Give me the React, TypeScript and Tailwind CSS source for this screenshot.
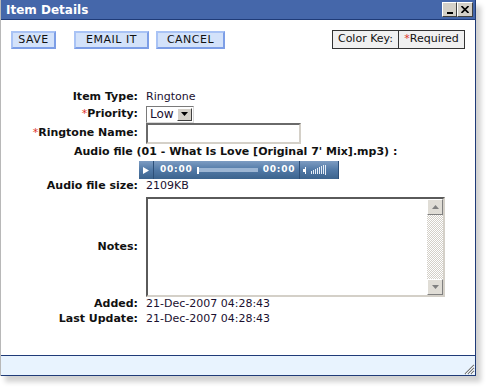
import { ReactNode } from "react"

function Btn({ children, className = "" }: { children: ReactNode; className?: string }) {
  return (
    <button
      className={`flex h-[18px] items-center justify-center border-2 border-t-[#a9c3f5] border-l-[#a9c3f5] border-b-[#7d9ee6] border-r-[#7d9ee6] bg-[#d3e2fa] text-[11px] leading-none tracking-[0.5px] text-[#111] ${className}`}
    >
      {children}
    </button>
  )
}

function Label({ children, req = false }: { children: ReactNode; req?: boolean }) {
  return (
    <div className="pr-[8px] text-right text-[11px] font-bold text-[#111]">
      {req && <span className="font-normal text-[#e0302a]">*</span>}
      {children}
    </div>
  )
}

function Player() {
  return (
    <div className="-ml-[7px] flex h-[18px] w-[200px] items-center bg-gradient-to-b from-[#7d9cc2] via-[#5179a6] to-[#3c638d] text-[9px] font-bold text-white">
      <div className="flex h-full w-[15px] items-center justify-center border-r border-[#2d4f78]">
        <svg width="6" height="7" viewBox="0 0 6 7"><path d="M0 0 L6 3.5 L0 7Z" fill="#fff" /></svg>
      </div>
      <span className="ml-[6px] tracking-[0.8px]">00:00</span>
      <div className="ml-[4px] h-[7px] w-[2px] bg-white" />
      <div className="h-[4px] w-[59px] bg-[#9cb5d3]" />
      <span className="ml-[5px] tracking-[0.8px]">00:00</span>
      <div className="ml-[4px] h-full w-px bg-[#2d4f78]" />
      <svg className="ml-[3px]" width="26" height="10" viewBox="0 0 26 10">
        <rect x="0" y="4" width="2" height="3" fill="#fff" />
        <rect x="2" y="2" width="1" height="7" fill="#fff" />
        {[8, 10, 12, 14, 16, 18, 20, 22].map((x, i) => (
          <rect key={x} x={x} y={Math.max(0, 6 - i)} width="1" height={Math.min(10, 3 + i)} fill="#e6eef8" />
        ))}
      </svg>
      <div className="ml-auto h-full w-px bg-[#2d4f78]" />
    </div>
  )
}

export default function App() {
  return (
    <div className="h-[390px] w-[494px] bg-white font-['DejaVu_Sans',sans-serif]">
      <div className="flex h-[376px] w-[476px] flex-col border-l border-l-[#b8b8b8] border-r border-r-[#1f3b78] shadow-[5px_6px_5px_rgba(0,0,0,0.18)]">
        {/* title bar */}
        <div className="flex h-[20px] items-center border-b border-[#1f3b78] bg-[#4567aa] pl-[5px] pr-[2px]">
          <span className="text-[12px] font-bold text-white">Item Details</span>
          <div className="ml-auto flex">
            <div className="flex h-[15px] w-[15px] items-end justify-center border border-t-white border-l-white border-b-[#404040] border-r-[#404040] bg-[#d4d0c8] pb-[2px]">
              <div className="h-[2px] w-[6px] bg-black" />
            </div>
            <div className="flex h-[15px] w-[16px] items-center justify-center border border-t-white border-l-white border-b-[#404040] border-r-[#404040] bg-[#d4d0c8]">
              <svg width="8" height="7" viewBox="0 0 8 7"><path d="M0.5 0 L7.5 7 M7.5 0 L0.5 7" stroke="#000" strokeWidth="1.6" /></svg>
            </div>
          </div>
        </div>

        {/* body */}
        <div className="flex-1 bg-white">
          <div className="flex items-center pl-[10px] pr-[10px] pt-[10px]">
            <Btn className="w-[45px]">SAVE</Btn>
            <Btn className="ml-[18px] w-[75px]">EMAIL IT</Btn>
            <Btn className="ml-[7px] w-[69px]">CANCEL</Btn>
            <div className="ml-auto flex h-[19px] border border-[#333] bg-[#f0f0f0] text-[11px] text-[#111]">
              <div className="flex w-[66px] items-center justify-center border-r border-[#333]">Color Key:</div>
              <div className="flex w-[65px] items-center justify-center">
                <span className="text-[#e0302a]">*</span>Required
              </div>
            </div>
          </div>

          <div className="mt-[40px] grid grid-cols-[145px_1fr] text-[11px] text-[#1a1030]">
            <div className="flex h-[16px] items-center justify-end"><Label>Item Type:</Label></div>
            <div className="flex h-[16px] items-center">Ringtone</div>

            <div className="flex h-[18px] items-center justify-end"><Label req>Priority:</Label></div>
            <div className="flex h-[18px] items-center">
              <div className="flex h-[17px] w-[48px] items-center border border-t-[#7a7a7a] border-l-[#7a7a7a] border-b-[#d8d8d8] border-r-[#d8d8d8] bg-white">
                <span className="pl-[3px] text-[12px]">Low</span>
                <div className="ml-auto mr-px flex h-[13px] w-[15px] items-center justify-center border border-t-white border-l-white border-b-[#404040] border-r-[#404040] bg-[#d4d0c8]">
                  <svg width="7" height="4" viewBox="0 0 7 4"><path d="M0 0 L7 0 L3.5 4Z" fill="#000" /></svg>
                </div>
              </div>
            </div>

            <div className="flex h-[21px] items-center justify-end"><Label req>Ringtone Name:</Label></div>
            <div className="flex h-[21px] items-center">
              <div className="h-[21px] w-[155px] border-2 border-t-[#6a6a6a] border-l-[#6a6a6a] border-b-[#d4d0c8] border-r-[#d4d0c8] bg-white" />
            </div>

            <div className="col-span-2 flex h-[17px] items-center pl-[73px] text-[11px] font-bold text-[#111]">
              Audio file (01 - What Is Love [Original 7' Mix].mp3) :
            </div>

            <div />
            <div className="flex h-[18px] items-center"><Player /></div>

            <div className="flex h-[15px] items-center justify-end"><Label>Audio file size:</Label></div>
            <div className="flex h-[15px] items-center">2109KB</div>

            <div className="mt-[3px] flex h-[100px] items-center justify-end"><Label>Notes:</Label></div>
            <div className="mt-[3px] flex h-[100px]">
              <div className="flex h-[100px] w-[299px] border-2 border-t-[#5a5a5a] border-l-[#5a5a5a] border-b-[#d4d0c8] border-r-[#d4d0c8] bg-white">
                <div className="flex-1" />
                <div className="flex w-[16px] flex-col bg-[repeating-conic-gradient(#d4d0c8_0_25%,#ffffff_0_50%)] bg-[length:2px_2px]">
                  <div className="flex h-[16px] items-center justify-center border border-t-white border-l-white border-b-[#808080] border-r-[#808080] bg-[#e0ddd6]">
                    <svg width="7" height="4" viewBox="0 0 7 4"><path d="M0 4 L7 4 L3.5 0Z" fill="#808080" /></svg>
                  </div>
                  <div className="flex-1" />
                  <div className="flex h-[16px] items-center justify-center border border-t-white border-l-white border-b-[#808080] border-r-[#808080] bg-[#e0ddd6]">
                    <svg width="7" height="4" viewBox="0 0 7 4"><path d="M0 0 L7 0 L3.5 4Z" fill="#808080" /></svg>
                  </div>
                </div>
              </div>
            </div>

            <div className="flex h-[15px] items-center justify-end"><Label>Added:</Label></div>
            <div className="flex h-[15px] items-center">21-Dec-2007 04:28:43</div>

            <div className="flex h-[14px] items-center justify-end"><Label>Last Update:</Label></div>
            <div className="flex h-[14px] items-center">21-Dec-2007 04:28:43</div>
          </div>
        </div>

        {/* status bar */}
        <div className="flex h-[21px] items-end justify-end border-y border-[#1f3b78] bg-[#e8f3fe]">
          <svg width="11" height="11" viewBox="0 0 11 11">
            <path d="M10 1 L1 10 M10 4 L4 10 M10 7 L7 10" stroke="#7a7a7a" strokeWidth="1.2" />
            <path d="M10 2 L2 10 M10 5 L5 10 M10 8 L8 10" stroke="#fff" strokeWidth="0.8" />
          </svg>
        </div>
      </div>
    </div>
  )
}
